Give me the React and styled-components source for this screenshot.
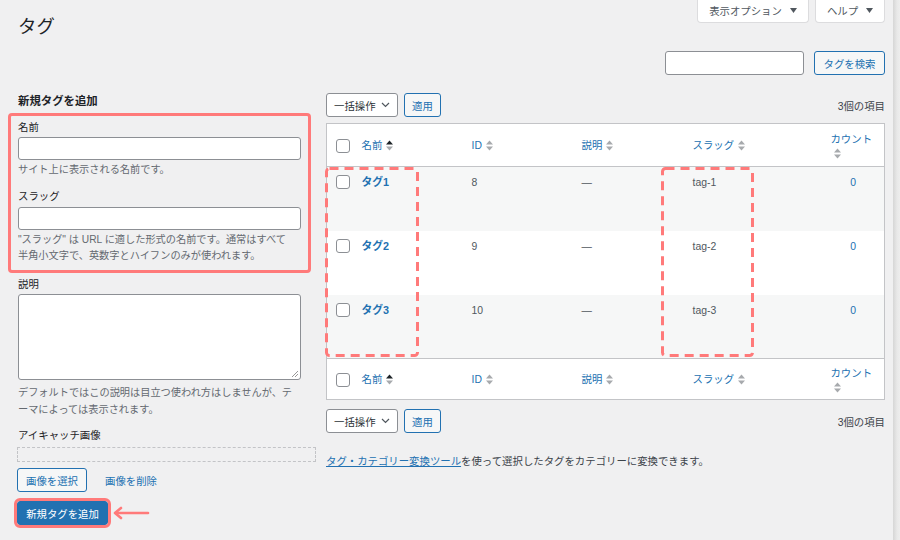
import styled, { createGlobalStyle } from "styled-components";

const font = `"Liberation Sans", "Noto Sans CJK JP", sans-serif`;
const blue = "#2271b1";
const red = "#ff7a7a";

const Global = createGlobalStyle`
	html, body {
		margin: 0;
		padding: 0;
		background: #f0f0f1;
	}
	body {
		font-family: ${font};
		font-size: 10.4px;
		color: #3c434a;
	}
	* {
		box-sizing: border-box;
	}
`;

function SortIcon({ active }) {
	return (
		<svg width='7' height='11' viewBox='0 0 7 11'>
			<polygon points='0,4.6 3.5,0.4 7,4.6' fill={active ? "#1d2327" : "#a7aaad"} />
			<polygon points='0,6.4 7,6.4 3.5,10.6' fill='#a7aaad' />
		</svg>
	);
}

function Caret() {
	return (
		<svg width='7' height='5' viewBox='0 0 7 5'>
			<polygon points='0,0 7,0 3.5,5' fill='#50575e' />
		</svg>
	);
}

function Chevron() {
	return (
		<svg width='9' height='6' viewBox='0 0 9 6'>
			<polyline points='1,1 4.5,4.5 8,1' fill='none' stroke='#50575e' strokeWidth='1.2' />
		</svg>
	);
}

function DashedBox({ left, width }) {
	return (
		<Dashed style={{ left, width }}>
			<svg width={width} height='190'>
				<rect
					x='1.5'
					y='1.5'
					width={width - 3}
					height='187'
					rx='3'
					fill='none'
					stroke={red}
					strokeWidth='3'
					strokeDasharray='9 6'
				/>
			</svg>
		</Dashed>
	);
}

function BulkBar({ count }) {
	return (
		<Bulk>
			<Select>
				一括操作 <Chevron />
			</Select>
			<SecondaryButton>適用</SecondaryButton>
			{count && <Count>3個の項目</Count>}
		</Bulk>
	);
}

function HeadRow({ foot }) {
	return (
		<HeadTr $foot={foot}>
			<th>
				<Check type='checkbox' />
			</th>
			<th>
				<Sortable>
					名前 <SortIcon active />
				</Sortable>
			</th>
			<th>
				<Sortable>
					ID <SortIcon />
				</Sortable>
			</th>
			<th>
				<Sortable>
					説明 <SortIcon />
				</Sortable>
			</th>
			<th>
				<Sortable>
					スラッグ <SortIcon />
				</Sortable>
			</th>
			<th className='count'>
				<CountHead>
					<span>カウント</span>
					<SortIcon />
				</CountHead>
			</th>
		</HeadTr>
	);
}

const tags = [
	{ name: "タグ1", id: 8, slug: "tag-1" },
	{ name: "タグ2", id: 9, slug: "tag-2" },
	{ name: "タグ3", id: 10, slug: "tag-3" },
];

export default function App() {
	return (
		<Page>
			<Global />
			<Main>
				<Header>
					<Title>タグ</Title>
					<ScreenMeta>
						<MetaButton $w={112}>
							表示オプション <Caret />
						</MetaButton>
						<MetaButton $w={70}>
							ヘルプ <Caret />
						</MetaButton>
					</ScreenMeta>
				</Header>

				<SearchRow>
					<SearchInput />
					<SecondaryButton $w={71}>タグを検索</SecondaryButton>
				</SearchRow>

				<Columns>
					<Left>
						<Heading>新規タグを追加</Heading>
						<Highlight>
							<Label>名前</Label>
							<Input />
							<Help>サイト上に表示される名前です。</Help>
							<Label $top={12}>スラッグ</Label>
							<Input $top={3} />
							<Help>
								"スラッグ" は URL に適した形式の名前です。通常はすべて
								<br />
								半角小文字で、英数字とハイフンのみが使われます。
							</Help>
						</Highlight>
						<Label $top={5}>説明</Label>
						<Textarea />
						<Help $lh={17} $top={4}>
							デフォルトではこの説明は目立つ使われ方はしませんが、テ
							<br />
							ーマによっては表示されます。
						</Help>
						<Label $top={11}>アイキャッチ画像</Label>
						<ImageBox />
						<ImageActions>
							<SecondaryButton $w={70}>画像を選択</SecondaryButton>
							<LinkButton>画像を削除</LinkButton>
						</ImageActions>
						<SubmitRow>
							<PrimaryButton>新規タグを追加</PrimaryButton>
							<svg width='38' height='14' viewBox='0 0 38 14'>
								<polyline
									points='9,2 3,7 9,12'
									fill='none'
									stroke={red}
									strokeWidth='2.6'
									strokeLinecap='round'
									strokeLinejoin='round'
								/>
								<line x1='4' y1='7' x2='36' y2='7' stroke={red} strokeWidth='2.6' strokeLinecap='round' />
							</svg>
						</SubmitRow>
					</Left>

					<Right>
						<BulkBar count />
						<TableWrap>
							<Table>
								<colgroup>
									<col style={{ width: 25 }} />
									<col style={{ width: 110 }} />
									<col style={{ width: 110 }} />
									<col style={{ width: 111 }} />
									<col style={{ width: 138 }} />
									<col />
								</colgroup>
								<thead>
									<HeadRow />
								</thead>
								<tbody>
									{tags.map((t, i) => (
										<Row key={t.id} $odd={i % 2 === 0}>
											<td>
												<Check type='checkbox' />
											</td>
											<td>
												<NameLink>{t.name}</NameLink>
											</td>
											<td>{t.id}</td>
											<td>—</td>
											<td>{t.slug}</td>
											<td className='count'>
												<CountLink>0</CountLink>
											</td>
										</Row>
									))}
								</tbody>
								<tfoot>
									<HeadRow foot />
								</tfoot>
							</Table>
							<DashedBox left={-1} width={94} />
							<DashedBox left={335} width={93} />
						</TableWrap>
						<BulkBar count />
						<Note>
							<a>タグ・カテゴリー変換ツール</a>を使って選択したタグをカテゴリーに変換できます。
						</Note>
					</Right>
				</Columns>
			</Main>
			<Edge />
		</Page>
	);
}

const Page = styled.div`
	display: flex;
	width: 900px;
	height: 540px;
	overflow: hidden;
	background: #f0f0f1;
`;

const Main = styled.div`
	flex: 1;
	padding: 0 8px 0 18px;
`;

const Edge = styled.div`
	width: 7px;
	background: linear-gradient(to right, #d6d6d6, #e9e9e9 60%, #ededed);
`;

const Header = styled.div`
	display: flex;
	justify-content: space-between;
	align-items: flex-start;
	height: 37px;
`;

const Title = styled.h1`
	margin: 14px 0 0;
	font-family: "Noto Sans CJK JP", sans-serif;
	font-size: 18.4px;
	font-weight: 400;
	line-height: 23px;
	color: #1d2327;
`;

const ScreenMeta = styled.div`
	display: flex;
	gap: 6px;
`;

const MetaButton = styled.div`
	display: flex;
	align-items: center;
	justify-content: center;
	gap: 8px;
	width: ${(p) => p.$w}px;
	height: 23px;
	background: #fff;
	border: 1px solid #dcdcde;
	border-top: none;
	border-radius: 0 0 4px 4px;
	color: #50575e;
	padding-bottom: 1px;
`;

const SearchRow = styled.div`
	display: flex;
	justify-content: flex-end;
	gap: 10px;
	margin-top: 14px;
	height: 24px;
`;

const SearchInput = styled.div`
	width: 139px;
	height: 24px;
	background: #fff;
	border: 1px solid #8c8f94;
	border-radius: 3px;
`;

const SecondaryButton = styled.div`
	display: flex;
	align-items: center;
	justify-content: center;
	height: 24px;
	padding: 0 7px;
	${(p) => p.$w && `width: ${p.$w}px;`}
	background: #f6f7f7;
	border: 1px solid ${blue};
	border-radius: 3px;
	color: ${blue};
	white-space: nowrap;
`;

const LinkButton = styled.div`
	display: flex;
	align-items: center;
	height: 24px;
	padding: 0 7px;
	color: ${blue};
`;

const PrimaryButton = styled.div`
	display: flex;
	align-items: center;
	justify-content: center;
	width: 91px;
	height: 24px;
	background: ${blue};
	border: 1px solid ${blue};
	border-radius: 3px;
	color: #fff;
	outline: 3px solid ${red};
	outline-offset: 0;
`;

const Columns = styled.div`
	display: flex;
	gap: 10px;
	margin-top: 18px;
`;

const Left = styled.div`
	width: 298px;
	flex-shrink: 0;
`;

const Heading = styled.h2`
	margin: 0 0 4px;
	font-size: 11.4px;
	font-weight: 700;
	line-height: 16px;
	color: #1d2327;
`;

const Highlight = styled.div`
	margin-left: -10px;
	width: 303px;
	border: 3px solid ${red};
	border-radius: 4px;
	padding: 5px 0 6px 7px;
`;

const Label = styled.div`
	margin-top: ${(p) => p.$top || 0}px;
	line-height: 14px;
	color: #1d2327;
`;

const Input = styled.div`
	margin-top: ${(p) => p.$top || 2}px;
	width: 283px;
	height: 23px;
	background: #fff;
	border: 1px solid #8c8f94;
	border-radius: 3px;
`;

const Textarea = styled.div`
	margin-top: 2px;
	width: 283px;
	height: 86px;
	background: #fff;
	border: 1px solid #8c8f94;
	border-radius: 3px;
	position: relative;
	&::after {
		content: "";
		position: absolute;
		right: 2px;
		bottom: 2px;
		width: 6px;
		height: 6px;
		background: linear-gradient(135deg, transparent 45%, #999 45%, #999 55%, transparent 55%, transparent 70%, #999 70%, #999 80%, transparent 80%);
	}
`;

const Help = styled.p`
	margin: ${(p) => p.$top || 2}px 0 0;
	font-size: 10.2px;
	line-height: ${(p) => p.$lh || 16}px;
	color: #646970;
	white-space: nowrap;
`;

const ImageBox = styled.div`
	margin: 4px 0 0 -1px;
	width: 299px;
	height: 15px;
	border: 1px dashed #c3c4c7;
`;

const ImageActions = styled.div`
	display: flex;
	gap: 11px;
	margin: 6px 0 0 -1px;
`;

const SubmitRow = styled.div`
	display: flex;
	align-items: center;
	gap: 4px;
	margin: 9px 0 0 -1px;
`;

const Right = styled.div`
	flex: 1;
`;

const Bulk = styled.div`
	display: flex;
	align-items: center;
	gap: 6px;
	height: 24px;
	& + & {
		margin-top: 10px;
	}
`;

const Select = styled.div`
	display: flex;
	align-items: center;
	gap: 5px;
	width: 72px;
	height: 24px;
	padding-left: 7px;
	background: #fff;
	border: 1px solid #8c8f94;
	border-radius: 3px;
	color: #2c3338;
`;

const Count = styled.div`
	margin-left: auto;
	color: #3c434a;
`;

const TableWrap = styled.div`
	position: relative;
	margin: 6px 0 9px;
`;

const Table = styled.table`
	width: 100%;
	table-layout: fixed;
	border-collapse: collapse;
	background: #fff;
	border: 1px solid #c3c4c7;
	.count {
		text-align: center;
	}
`;

const HeadTr = styled.tr`
	height: ${(p) => (p.$foot ? 41 : 43)}px;
	th {
		padding: 0 10px;
		text-align: left;
		font-weight: 400;
		color: ${blue};
		vertical-align: middle;
		line-height: 15px;
		border-${(p) => (p.$foot ? "top" : "bottom")}: 1px solid #c3c4c7;
	}
	th:first-child {
		padding: 2px 0 0 9px;
	}
	th.count {
		padding: 0 2px;
	}
`;

const Sortable = styled.span`
	display: inline-flex;
	align-items: center;
	gap: 4px;
`;

const CountHead = styled.span`
	display: inline-flex;
	flex-direction: column;
	align-items: flex-start;
	gap: 1px;
	white-space: nowrap;
	padding-right: 2px;
	svg {
		margin-left: 4px;
	}
`;

const Row = styled.tr`
	height: 64px;
	background: ${(p) => (p.$odd ? "#f6f7f7" : "#fff")};
	td {
		padding: 8px 10px 0;
		vertical-align: top;
		line-height: 15px;
		color: #50575e;
	}
	td:first-child {
		padding: 8px 0 0 9px;
	}
	td.count {
		padding: 8px 2px 0 4px;
	}
`;

const Check = styled.input`
	appearance: none;
	display: block;
	margin: 0;
	width: 14px;
	height: 14px;
	background: #fff;
	border: 1px solid #8c8f94;
	border-radius: 3px;
`;

const NameLink = styled.a`
	font-weight: 700;
	color: ${blue};
	font-size: 10.8px;
`;

const CountLink = styled.a`
	color: ${blue};
`;

const Dashed = styled.div`
	position: absolute;
	top: 44px;
	height: 190px;
	svg {
		display: block;
	}
`;

const Note = styled.p`
	margin: 21px 0 0;
	line-height: 16px;
	color: #3c434a;
	a {
		color: ${blue};
		text-decoration: underline;
	}
`;
